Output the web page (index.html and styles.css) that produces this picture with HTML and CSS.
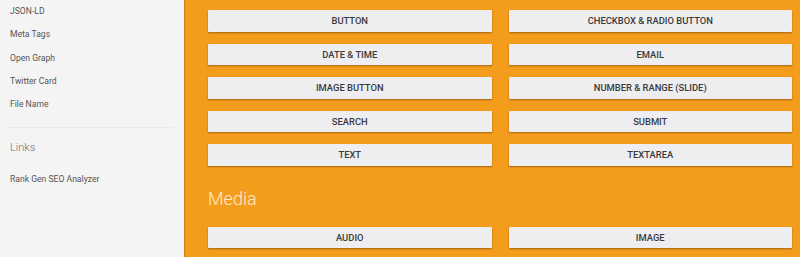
FILE: index.html
```html
<!DOCTYPE html>
<html lang="en">
<head>
    <meta charset="UTF-8">
    <meta name="viewport" content="width=device-width, initial-scale=1.0">
    <title>Form Elements</title>
    <link rel="stylesheet" href="styles.css">
</head>
<body>
    <div class="layout">
        <aside class="sidebar">
            <ul class="nav">
                <li>JSON-LD</li>
                <li>Meta Tags</li>
                <li>Open Graph</li>
                <li>Twitter Card</li>
                <li>File Name</li>
            </ul>
            <hr class="divider">
            <h3 class="nav-title">Links</h3>
            <ul class="nav">
                <li>Rank Gen SEO Analyzer</li>
            </ul>
        </aside>

        <main class="content">
            <div class="btn-grid">
                <button class="btn">Button</button>
                <button class="btn">Checkbox &amp; Radio Button</button>
                <button class="btn">Date &amp; Time</button>
                <button class="btn">Email</button>
                <button class="btn">Image Button</button>
                <button class="btn">Number &amp; Range (Slide)</button>
                <button class="btn">Search</button>
                <button class="btn">Submit</button>
                <button class="btn">Text</button>
                <button class="btn">Textarea</button>
            </div>

            <h2 class="section-title">Media</h2>
            <div class="btn-grid">
                <button class="btn">Audio</button>
                <button class="btn">Image</button>
            </div>
        </main>
    </div>
</body>
</html>
```

FILE: styles.css
```css
html, body {
    margin: 0;
    height: 100%;
    overflow: hidden;
}
body {
    font-family: Roboto, "Liberation Sans", sans-serif;
}
.layout {
    display: flex;
    height: 100%;
}
.sidebar {
    width: 184px;
    flex-shrink: 0;
    background-color: #f4f4f4;
    padding-top: 4px;
    box-sizing: border-box;
}
.nav {
    list-style: none;
    margin: 0;
    padding: 0;
}
.nav li {
    font-size: 8.6px;
    color: #555;
    padding: 0 10px;
    height: 23.3px;
    line-height: 14px;
}
.divider {
    border: none;
    border-top: 1px solid #ebebeb;
    margin: 7px 10px 13px 8px;
}
.nav-title {
    margin: 0 0 17px 10px;
    font-size: 11px;
    font-weight: 300;
    color: #6f6f6f;
    line-height: 14px;
}
.content {
    flex: 1;
    background-color: #f49c1c;
    padding: 10px 8px 0 24px;
    box-shadow: inset 2px 0 2px -1px rgba(0, 0, 0, 0.2);
}
.btn-grid {
    display: grid;
    grid-template-columns: 1fr 1fr;
    column-gap: 17px;
    row-gap: 12px;
}
.btn {
    height: 21.5px;
    border: none;
    border-radius: 1px;
    background-color: #eeeef0;
    box-shadow: 0 1px 2px rgba(0, 0, 0, 0.35);
    font-family: Roboto, "Liberation Sans", sans-serif;
    font-size: 9.4px;
    font-weight: 500;
    text-transform: uppercase;
    color: #3a3a3a;
    padding: 0;
    cursor: pointer;
}
.section-title {
    margin: 22px 0 17px 0;
    font-size: 18px;
    font-weight: 300;
    color: #fdebcc;
    line-height: 22px;
}
```
